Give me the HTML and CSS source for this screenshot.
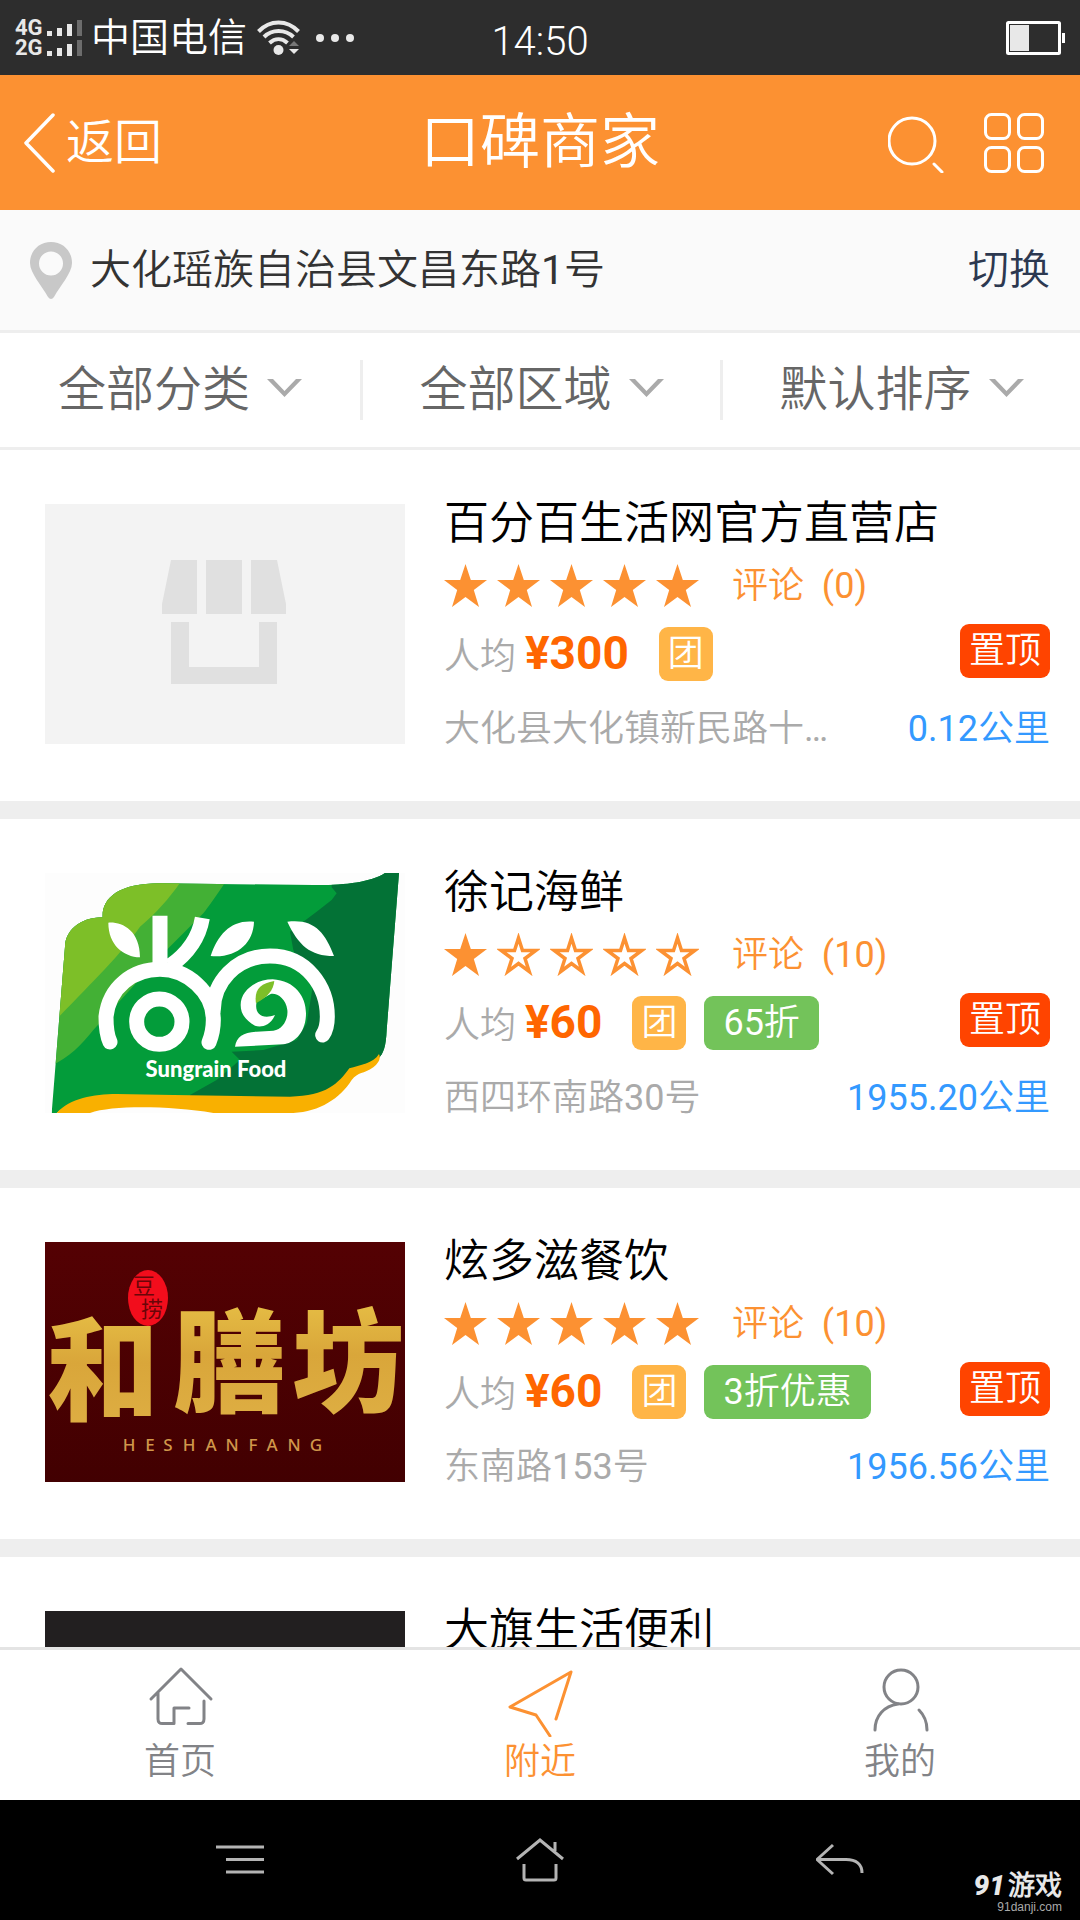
FILE: index.html
```html
<!DOCTYPE html>
<html lang="zh-CN">
<head>
<meta charset="utf-8">
<meta name="viewport" content="width=device-width, initial-scale=1">
<title>口碑商家</title>
<link rel="stylesheet" href="styles.css">
</head>
<body>
<svg class="defs" width="0" height="0" aria-hidden="true">
  <symbol id="star" viewBox="0 0 43 43"><path fill="currentColor" d="M21.500 0L26.800 16H43L29.800 26L35 43L21.500 33L8 43L13.200 26L0 16H16.200Z"/></symbol>
  <symbol id="star-empty" viewBox="0 0 43 43"><path fill="none" stroke="currentColor" stroke-width="3.500" d="M21.500 5L25.500 17.600H38.500L28 25.500L32.200 38.500L21.500 30.500L10.800 38.500L15 25.500L4.500 17.600H17.500Z"/></symbol>
  <symbol id="chevron" viewBox="0 0 35 18"><path fill="#aaa" d="M0 0H6L17.500 12L29 0H35L17.500 18Z"/></symbol>
</svg>

<div class="status-bar">
  <div class="status-left">
    <div class="network"><span>4G</span><span>2G</span></div>
    <svg class="signal" width="35" height="36" viewBox="0 0 35 36">
      <path fill="#e8e8e8" d="M0 11h5v5H0zM10 8h5v8h-5zM20 4h5v12h-5zM0 31h5v5H0zM10 28h5v8h-5zM20 24h5v12h-5z"/>
      <path fill="#6c6c6c" d="M30 0h5v16h-5zM30 20h5v16h-5z"/>
    </svg>
    <span class="carrier">中国电信</span>
    <svg width="43" height="36" viewBox="0 0 43 36">
      <g fill="none" stroke="#e8e8e8" stroke-width="4"><path d="M1.500 11.500C13-.500 30-.500 41.500 11.500M7 17C15 9 28 9 36.500 17M12.500 23C18 18 25 18 30.500 23"/></g>
      <circle cx="21.500" cy="30" r="5" fill="#e8e8e8"/>
      <path fill="#777" d="M32 26l5-5 5 5z"/><path fill="#e8e8e8" d="M32 29l5 5 5-5z"/>
    </svg>
    <svg class="more" width="38" height="8" viewBox="0 0 38 8" fill="#e8e8e8"><circle cx="4" cy="4" r="4"/><circle cx="19" cy="4" r="4"/><circle cx="34" cy="4" r="4"/></svg>
  </div>
  <time class="clock">14:50</time>
  <svg class="battery" width="59" height="34" viewBox="0 0 59 34">
    <rect x="1.500" y="1.500" width="52" height="31" rx="1" fill="none" stroke="#fff" stroke-width="3"/>
    <path fill="#e8e8e8" d="M4 4h19v26H4z"/><path fill="#fff" d="M56 12h3v10h-3z"/>
  </svg>
</div>

<header class="header">
  <a class="back" href="#">
    <svg width="31" height="60" viewBox="0 0 31 60"><path d="M29 2L2 30L29 58" fill="none" stroke="#fff" stroke-width="3.500" stroke-linecap="round" stroke-linejoin="round"/></svg>
    返回
  </a>
  <h1>口碑商家</h1>
  <div class="header-actions">
    <button type="button" aria-label="搜索"><svg width="56" height="60" viewBox="0 0 56 60" fill="none" stroke="#fff" stroke-width="3" stroke-linecap="round"><circle cx="24" cy="28" r="23"/><path d="M46 51l8 8"/></svg></button>
    <button type="button" aria-label="分类"><svg width="60" height="60" viewBox="0 0 60 60" fill="none" stroke="#fff" stroke-width="3"><rect x="1.500" y="1.500" width="24" height="24" rx="6"/><rect x="34.500" y="1.500" width="24" height="24" rx="6"/><rect x="1.500" y="34.500" width="24" height="24" rx="6"/><rect x="34.500" y="34.500" width="24" height="24" rx="6"/></svg></button>
  </div>
</header>

<div class="location">
  <svg width="42" height="57" viewBox="0 0 42 57"><path fill="#c8c8c8" fill-rule="evenodd" d="M21 0C33 0 42 9 42 21C42 31 30 44 24 55Q21 59 18 55C12 44 0 31 0 21C0 9 9 0 21 0ZM21 9.500a12 12 0 1 0 0 24a12 12 0 1 0 0-24Z"/></svg>
  <span>大化瑶族自治县文昌东路1号</span>
  <a href="#">切换</a>
</div>

<div class="filters">
  <label class="filter"><select aria-label="分类"><option>全部分类</option></select><svg width="35" height="18"><use href="#chevron"/></svg></label>
  <label class="filter"><select aria-label="区域"><option>全部区域</option></select><svg width="35" height="18"><use href="#chevron"/></svg></label>
  <label class="filter"><select aria-label="排序"><option>默认排序</option></select><svg width="35" height="18"><use href="#chevron"/></svg></label>
</div>

<main class="shops">
  <article class="shop">
    <svg class="thumb" viewBox="0 0 360 240">
      <path fill="#f3f3f3" d="M0 0h360v240H0z"/>
      <path fill="#e0e0e0" d="M126 56h26v54h-35v-10zM161 56h36v54h-36zM206 56h26l9 44v10h-35zM126 118h18v45h70v-45h18v62H126z"/>
    </svg>
    <div class="info">
      <h2>百分百生活网官方直营店</h2>
      <div class="rating">
        <span class="stars" role="img" aria-label="5星"><svg><use href="#star"/></svg><svg><use href="#star"/></svg><svg><use href="#star"/></svg><svg><use href="#star"/></svg><svg><use href="#star"/></svg></span>
        <span class="comments">评论&nbsp; (0)</span>
      </div>
      <div class="meta"><span class="avg">人均 <strong>¥300</strong></span><span class="tag group">团</span><span class="tag pinned">置顶</span></div>
      <div class="place"><span>大化县大化镇新民路十…</span><span class="distance">0.12公里</span></div>
    </div>
  </article>

  <article class="shop">
    <svg class="thumb" viewBox="0 0 360 240">
      <defs><clipPath id="flag"><path d="M65 789L105 290C106 245 145 203 218 202C215 145 265 100 390 100L850 105C940 106 1020 98 1065 69H1107L1070 540C1068 590 1060 612 1045 625C1000 650 970 650 958 668C920 715 890 765 790 765L250 745C180 745 110 765 80 789Z"/></clipPath></defs>
      <path fill="#fdfdfd" d="M0 0h360v240H0z"/>
      <g transform="scale(.33333) translate(-45 -69)">
        <g clip-path="url(#flag)">
          <path fill="#039c3a" d="M45 69h1080v720H45z"/>
          <path fill="#43b035" d="M45 69H605C570 120 540 165 520 190L400 310L190 540C150 590 110 630 45 655Z"/>
          <path fill="#7dbf28" d="M45 69H470C430 130 390 180 330 230C260 330 180 400 45 545Z"/>
          <path fill="#037236" d="M905 69V112L920 130L905 150L860 185L780 245L790 300L820 380L850 400L830 520L800 570L700 600L605 605L630 630L560 690L480 735V789H1125V69Z"/>
        </g>
        <path fill="#f9b000" d="M80 789C120 745 190 732 260 732L430 735L780 740C890 738 925 700 958 655C990 645 1030 640 1047 612Q1056 630 1030 652C1000 673 985 665 965 690C930 745 870 785 790 789H550C420 768 250 765 180 789Z"/>
        <g fill="none" stroke="#fff" stroke-width="45" stroke-linecap="round">
          <path d="M240 576C228 550 228 520 228 500C238 410 310 358 390 358C470 358 550 425 550 510Q550 545 537 577"/>
          <path d="M550 480C550 400 615 318 720 318C830 318 892 410 892 500Q892 535 878 555"/>
          <circle cx="388" cy="515" r="68"/>
          <path stroke-linecap="butt" d="M390 197V345M517 204C505 275 460 320 420 348"/>
        </g>
        <path fill="#fff" d="M235 218C275 215 330 240 330 322C280 320 235 285 235 218ZM672 215C605 208 565 250 542 318C620 325 670 280 672 215ZM772 215C850 205 885 245 912 318C840 318 805 285 772 215ZM735 495C720 530 690 533 675 527C645 510 632 490 632 465C632 420 680 388 728 388C795 392 828 440 828 490C828 550 790 580 760 583L615 590C620 560 640 547 680 545L730 542C760 538 775 505 772 480C768 445 740 428 722 432L680 455C672 490 695 510 735 495Z"/>
        <path fill="#7dbf28" d="M733 393C690 400 672 420 678 460C715 440 730 420 733 393Z"/>
      </g>
      <text class="logo-latin" x="171" y="204">Sungrain Food</text>
    </svg>
    <div class="info">
      <h2>徐记海鲜</h2>
      <div class="rating">
        <span class="stars" role="img" aria-label="1星"><svg><use href="#star"/></svg><svg><use href="#star-empty"/></svg><svg><use href="#star-empty"/></svg><svg><use href="#star-empty"/></svg><svg><use href="#star-empty"/></svg></span>
        <span class="comments">评论&nbsp; (10)</span>
      </div>
      <div class="meta"><span class="avg">人均 <strong>¥60</strong></span><span class="tag group">团</span><span class="tag discount">65折</span><span class="tag pinned">置顶</span></div>
      <div class="place"><span>西四环南路30号</span><span class="distance">1955.20公里</span></div>
    </div>
  </article>

  <article class="shop">
    <svg class="thumb" viewBox="0 0 360 240">
      <defs>
        <linearGradient id="maroon" x2="0" y2="1"><stop stop-color="#540103"/><stop offset="1" stop-color="#420001"/></linearGradient>
        <linearGradient id="gold" x2="0" y2="1"><stop stop-color="#ecc94a"/><stop offset=".5" stop-color="#d9a63a"/><stop offset="1" stop-color="#dfb045"/></linearGradient>
      </defs>
      <path fill="url(#maroon)" d="M0 0h360v240H0z"/>
      <g class="logo-han" fill="url(#gold)"><text x="58" y="170">和</text><text x="184" y="162">膳</text><text x="303" y="162">坊</text></g>
      <ellipse cx="103" cy="56" rx="20" ry="28" fill="#f20d1c"/>
      <text class="logo-seal" x="99" y="52">豆</text><text class="logo-seal" x="107" y="75">捞</text>
      <g class="logo-pinyin"><text x="84" y="209">H</text><text x="105" y="209">E</text><text x="123" y="209">S</text><text x="144" y="209">H</text><text x="166" y="209">A</text><text x="187" y="209">N</text><text x="208" y="209">F</text><text x="227" y="209">A</text><text x="249" y="209">N</text><text x="271" y="209">G</text></g>
    </svg>
    <div class="info">
      <h2>炫多滋餐饮</h2>
      <div class="rating">
        <span class="stars" role="img" aria-label="5星"><svg><use href="#star"/></svg><svg><use href="#star"/></svg><svg><use href="#star"/></svg><svg><use href="#star"/></svg><svg><use href="#star"/></svg></span>
        <span class="comments">评论&nbsp; (10)</span>
      </div>
      <div class="meta"><span class="avg">人均 <strong>¥60</strong></span><span class="tag group">团</span><span class="tag discount">3折优惠</span><span class="tag pinned">置顶</span></div>
      <div class="place"><span>东南路153号</span><span class="distance">1956.56公里</span></div>
    </div>
  </article>

  <article class="shop">
    <svg class="thumb" viewBox="0 0 360 240"><path fill="#221f20" d="M0 0h360v240H0z"/></svg>
    <div class="info"><h2>大旗生活便利</h2></div>
  </article>
</main>

<nav class="tabs">
  <a href="#"><svg width="72" height="72" viewBox="0 0 72 72"><path d="M7 34L37 4L67 34M14 28V54Q14 59 19 58.500H30V43H45M60 36V54Q60 59 55 58.500H44"/></svg>首页</a>
  <a class="active" href="#"><svg width="72" height="72" viewBox="0 0 72 72"><path d="M52 54L67 7L6 42L32 50L46 71"/></svg>附近</a>
  <a href="#"><svg width="72" height="72" viewBox="0 0 72 72"><ellipse cx="37" cy="22" rx="17" ry="17"/><path d="M34 39C20 41 11 51 11 65M55 45Q63 53 63 65"/></svg>我的</a>
</nav>

<div class="system-nav">
  <button type="button" aria-label="菜单"><svg width="48" height="48" viewBox="0 0 48 48"><path d="M0 11H48M10 23.500H48M10 36H48"/></svg></button>
  <button type="button" aria-label="主屏幕"><svg width="48" height="48" viewBox="0 0 48 48"><path d="M1 23L24 4L47 23M39 6V15M8 28V42Q8 44 10 44H38Q40 44 40 42V28"/></svg></button>
  <button type="button" aria-label="返回"><svg width="48" height="48" viewBox="0 0 48 48"><path d="M17 9L1 23.500L17 38M1 23.500H30C40 23.500 46 28 46 37"/></svg></button>
  <div class="watermark"><div class="brand"><em>91</em>游戏</div><div class="site">91danji.com</div></div>
</div>
</body>
</html>
```
FILE: styles.css
```css
* { box-sizing: border-box; }

body {
  margin: 0;
  height: 100vh;
  display: flex;
  flex-direction: column;
  background: #fff;
  color: #000;
  font-family: Roboto, "Noto Sans CJK SC DemiLight", "Noto Sans CJK SC", sans-serif;
  font-weight: 400;
  font-size: 36px;
}

body > * { flex: none; }
.defs { position: absolute; }
svg { display: block; flex: none; }
a { color: inherit; text-decoration: none; }
h1, h2 { margin: 0; font-weight: inherit; }
button { padding: 0; border: 0; background: none; }

.status-bar {
  height: 75px;
  padding: 0 15px;
  display: grid;
  grid-template-columns: 1fr auto 1fr;
  align-items: center;
  background: #2d2d2d;
  color: #fff;
}
.status-left { display: flex; align-items: center; }
.network {
  display: flex;
  flex-direction: column;
  width: 32px;
  font-size: 22px;
  font-weight: 700;
  line-height: 20px;
  color: #e8e8e8;
}
.carrier { margin: 0 10px 0 9px; font-size: 39px; line-height: 54px; }
.more { margin-left: 16px; }
.clock { font-size: 40px; font-weight: 300; line-height: 54px; padding-top: 8px; }
.battery { justify-self: end; }

.header {
  height: 135px;
  padding: 0 24px;
  display: grid;
  grid-template-columns: 1fr auto 1fr;
  align-items: center;
  background: #fc9132;
  color: #fff;
}
.back { display: flex; align-items: center; gap: 11px; font-size: 48px; line-height: 60px; }
.header h1 { font-size: 60px; line-height: 72px; }
.header-actions { display: flex; justify-content: flex-end; gap: 40px; padding-right: 12px; }

.location {
  height: 123px;
  padding: 0 30px;
  display: flex;
  align-items: center;
  gap: 18px;
  border-bottom: 3px solid #eee;
  background: #fafafa;
  color: #333;
  font-size: 41px;
  line-height: 54px;
}
.location a { margin-left: auto; color: #2c3850; }

.filters {
  height: 117px;
  display: grid;
  grid-template-columns: repeat(3, 1fr);
  align-items: center;
  border-bottom: 3px solid #eee;
}
.filter { display: flex; align-items: center; justify-content: center; gap: 16px; height: 60px; }
.filter svg { margin-bottom: 4px; }
.filter + .filter { border-left: 3px solid #eee; }
.filter select {
  appearance: none;
  margin: 0;
  padding: 0;
  border: 0;
  background: none;
  color: #666;
  font: inherit;
  font-size: 48px;
  line-height: 60px;
}

.shops { flex: 1 1 0; min-height: 0; overflow-y: auto; scrollbar-width: none; }
.shop {
  display: flex;
  gap: 39px;
  padding: 45px 30px 36px 45px;
  border-bottom: 18px solid #eee;
}
.thumb { width: 360px; height: 240px; margin-top: 9px; }
.info { flex: 1; min-width: 0; }
.info h2 { font-size: 45px; line-height: 58px; }
.rating { height: 65px; display: flex; align-items: center; gap: 33px; color: #fc9132; }
.stars { display: flex; gap: 10px; }
.stars svg { width: 43px; height: 43px; }
.comments { line-height: 54px; }
.meta { height: 72px; display: flex; align-items: center; gap: 18px; }
.avg { margin-right: 12px; padding-top: 2px; color: #aaa; line-height: 54px; }
.avg strong { color: #f60; font-size: 46px; font-weight: 700; }
.tag { padding: 0 9px; border-radius: 9px; color: #fff; line-height: 54px; }
.group { background: #ffb547; }
.discount { padding: 0 19px; background: #73c35a; }
.pinned { margin: 0 0 6px auto; background: #ff4400; }
.place { height: 75px; padding-top: 3px; display: flex; align-items: center; justify-content: space-between; color: #aaa; line-height: 54px; }
.distance { color: #39f; }

.logo-latin { font: 900 22px Lato, sans-serif; fill: #fff; text-anchor: middle; }
.logo-han { font: 900 112px "Noto Sans CJK SC", sans-serif; text-anchor: middle; }
.logo-seal { font: 400 22px "Noto Sans CJK SC", sans-serif; fill: #6a0508; text-anchor: middle; }
.logo-pinyin { font: 500 17px "Noto Sans", sans-serif; fill: #d0974a; text-anchor: middle; }

.tabs {
  height: 153px;
  display: grid;
  grid-template-columns: repeat(3, 1fr);
  border-top: 3px solid #e4e4e4;
  color: #828387;
}
.tabs a { display: flex; flex-direction: column; align-items: center; padding-top: 15px; line-height: 50px; }
.tabs svg { fill: none; stroke: currentColor; stroke-width: 3; stroke-linecap: round; stroke-linejoin: round; }
.tabs .active { color: #fc9132; }

.system-nav {
  position: relative;
  height: 120px;
  padding: 0 90px;
  display: grid;
  grid-template-columns: repeat(3, 1fr);
  place-items: center;
  background: #000;
}
.system-nav svg { fill: none; stroke: #b4b4b4; stroke-width: 3; }
.watermark { position: absolute; right: 18px; bottom: 6px; text-align: right; color: #e8e8e8; }
.brand { font-size: 27px; font-weight: 900; line-height: 28px; }
.brand em { margin-right: 3px; font-size: 28px; }
.site { font: 12px/14px "Liberation Sans", sans-serif; color: #aaa; }
```
